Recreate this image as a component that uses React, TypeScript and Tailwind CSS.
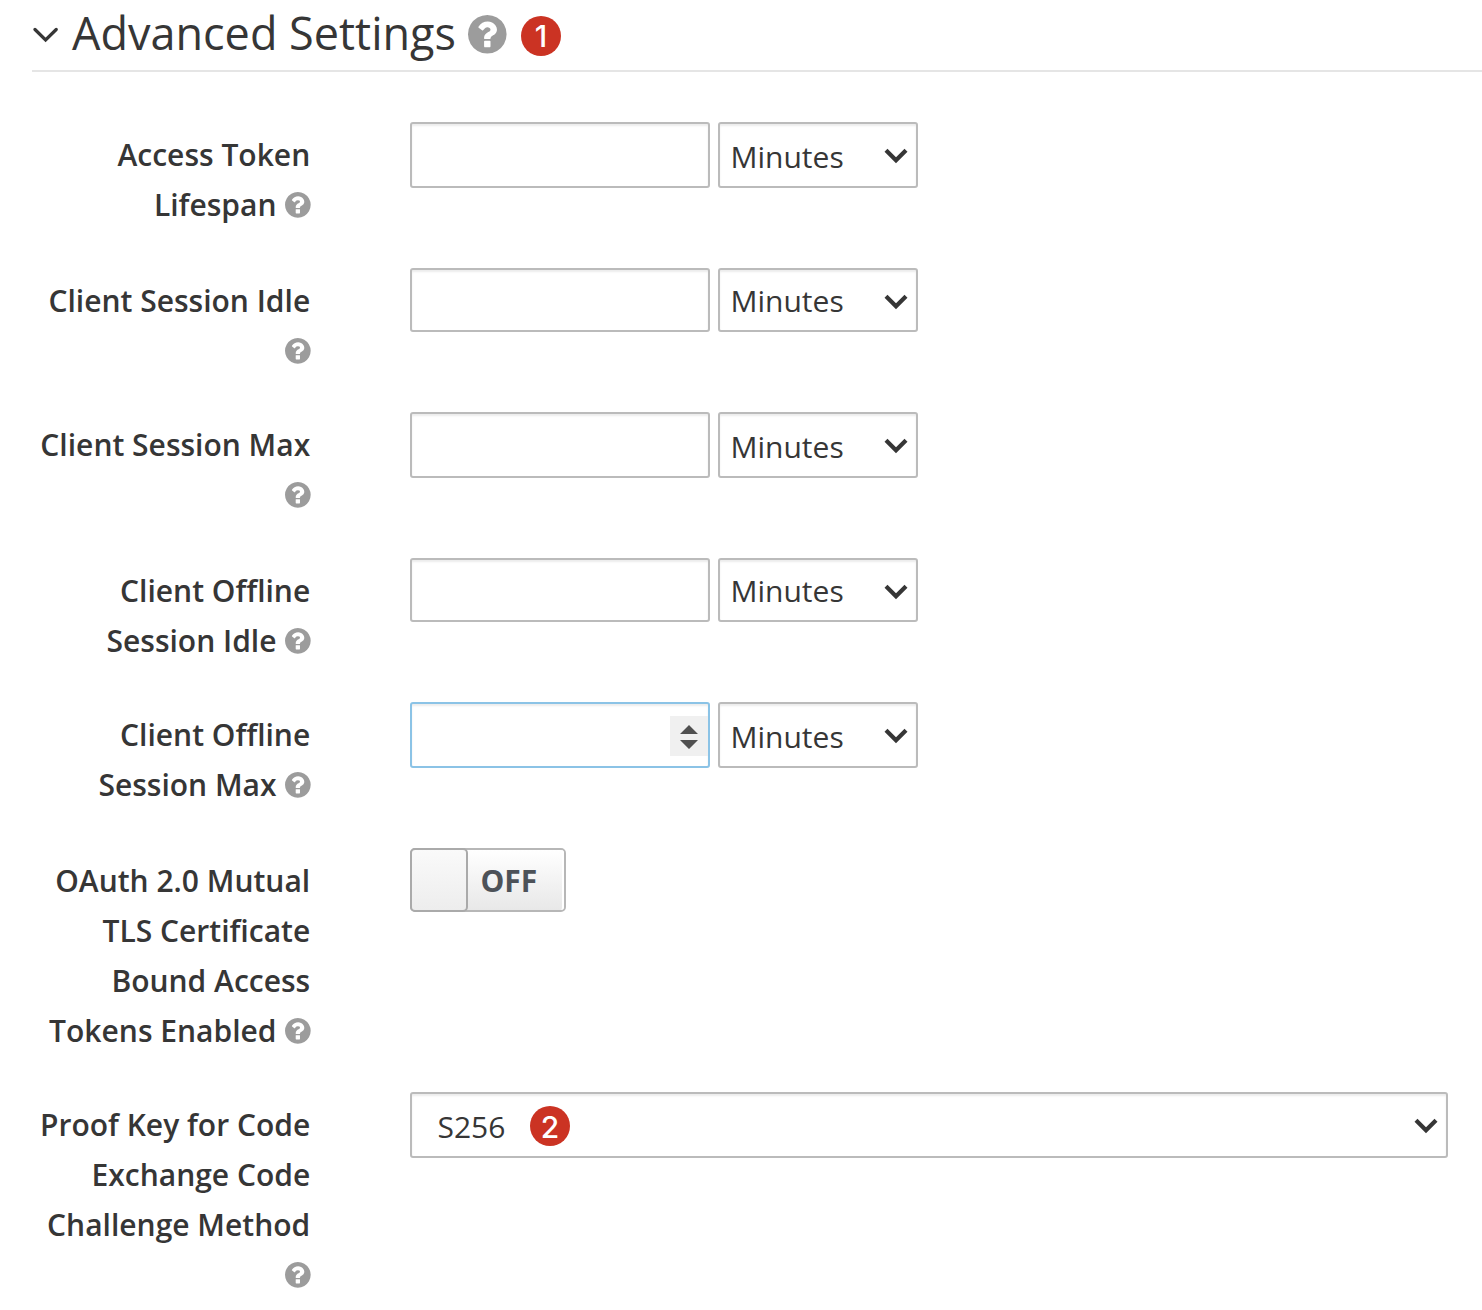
import React from 'react';

function HelpIcon({ className }: { className: string }) {
  return (
    <svg viewBox="128 128 1536 1536" className={`overflow-visible ${className}`} fill="#9c9c9c" aria-hidden="true">
      <path d="M1024 1376v-192q0-14-9-23t-23-9h-192q-14 0-23 9t-9 23v192q0 14 9 23t23 9h192q14 0 23-9t9-23zm256-672q0-88-55.5-163t-138.5-116-170-41q-243 0-371 213-15 24 8 42l132 100q7 6 19 6 16 0 25-12 53-68 86-92 34-24 86-24 48 0 85.5 26t37.5 59q0 38-20 61t-68 45q-63 28-115.5 86.5t-52.5 125.5v36q0 14 9 23t23 9h192q14 0 23-9t9-23q0-19 21.5-49.5t54.5-49.5q32-18 49-28.5t46-35 44.5-48 28-60.5 12.5-81zm384 192q0 209-103 385.5t-279.5 279.5-385.5 103-385.5-103-279.5-279.5-103-385.5 103-385.5 279.5-279.5 385.5-103 385.5 103 279.5 279.5 103 385.5z" />
    </svg>
  );
}

function Chevron({ className }: { className: string }) {
  return (
    <svg viewBox="0 0 24 16" className={`h-4 w-6 shrink-0 ${className}`} fill="none" stroke="#363636" strokeWidth="4.2" aria-hidden="true">
      <path d="M2 2.3 12 12.2 22 2.3" />
    </svg>
  );
}

function Badge({ children }: { children: React.ReactNode }) {
  return (
    <span className="flex size-10 items-center justify-center rounded-full bg-[#cb3323] pt-px font-[Inter,sans-serif] text-[30px] leading-none font-medium text-white">
      {children}
    </span>
  );
}

function Row({ lines, height, children }: { lines: string[]; height: string; children: React.ReactNode }) {
  return (
    <div className={`flex items-start ${height}`}>
      <div className="w-[310.2px] shrink-0 pt-2 text-right text-[30px] leading-[50px] font-semibold whitespace-nowrap">
        {lines.map((line, i) => (
          <div key={i} className="flex h-[50px] items-center justify-end gap-2">
            {line && <span>{line}</span>}
            {i === lines.length - 1 && <HelpIcon className="size-[25.7px]" />}
          </div>
        ))}
      </div>
      <div className="ml-[99.8px] flex gap-2">{children}</div>
    </div>
  );
}

const field = 'rounded-[3px] border-2 bg-white shadow-[inset_0_2px_2px_rgba(0,0,0,0.075)]';

function Duration({ lines, height, box, text, chevron, focused }: { lines: string[]; height: string; box: string; text: string; chevron: string; focused?: boolean }) {
  return (
    <Row lines={lines} height={height}>
      <div className={`flex w-[300px] items-center justify-end ${field} ${box} ${focused ? 'border-[#8bc3e6]' : 'border-[#bbb]'}`}>
        {focused && (
          <span className="mt-0.5 flex h-10 w-[38px] items-center justify-center bg-[#f0f0f0]">
            <svg viewBox="0 0 18 24" className="mt-0.5 h-6 w-[18px]" fill="#505050" aria-hidden="true">
              <path d="M9 0 18 9H0zM0 15h18l-9 9z" />
            </svg>
          </span>
        )}
      </div>
      <div className={`flex w-[200px] items-center justify-between border-[#bbb] pr-2 pl-[10.5px] text-[30px] leading-none ${field} ${box}`}>
        <span className={text}>Minutes</span>
        <Chevron className={chevron} />
      </div>
    </Row>
  );
}

export default function App() {
  return (
    <main className="h-[1310px] overflow-hidden bg-white font-['Open_Sans',sans-serif] text-[#363636]">
      <header className="ml-8 flex h-[72px] items-center border-b-2 border-[#e5e5e5]">
        <svg viewBox="0 0 26 16" className="ml-px h-4 w-[26px]" fill="none" stroke="#363636" strokeWidth="3.2" strokeLinecap="round" aria-hidden="true">
          <path d="M2 2.5 12.6 13 23.2 2.5" />
        </svg>
        <h1 className="mb-1 ml-[13px] text-[45px] leading-[66px] whitespace-nowrap">Advanced Settings</h1>
        <HelpIcon className="mb-0.5 ml-[11.8px] size-[38.6px]" />
        <div className="mt-px ml-[14.7px]"><Badge>1</Badge></div>
      </header>
      <div className="pt-[50px]">
        <Duration lines={['Access Token', 'Lifespan']} height="h-[146px]" box="h-[66px]" text="pt-1" chevron="mt-0.5" />
        <Duration lines={['Client Session Idle', '']} height="h-36" box="h-16" text="pt-0.5" chevron="mt-[3px]" />
        <Duration lines={['Client Session Max', '']} height="h-[146px]" box="h-[66px]" text="pt-1" chevron="mt-0.5" />
        <Duration lines={['Client Offline', 'Session Idle']} height="h-36" box="h-16" text="pt-0.5" chevron="mt-[3px]" />
        <Duration lines={['Client Offline', 'Session Max']} height="h-[146px]" box="h-[66px]" text="pt-1" chevron="mt-0.5" focused />
        <Row lines={['OAuth 2.0 Mutual', 'TLS Certificate', 'Bound Access', 'Tokens Enabled']} height="h-[244px]">
          <div className="flex h-16 w-[156px] rounded-[5px] border-2 border-[#b7b7b7] bg-linear-to-b from-white to-[#e8e8e8]">
            <span className="-my-0.5 -ml-0.5 h-16 w-[58px] rounded-[5px] border-2 border-[#aaa] bg-linear-to-b from-[#fafafa] to-[#ededed]" />
            <span className="flex flex-1 items-center rounded-r-[3px] border-r-2 border-white pt-0.5 pl-[12.5px] text-[30px] leading-none font-bold text-[#4d5258]">OFF</span>
          </div>
        </Row>
        <Row lines={['Proof Key for Code', 'Exchange Code', 'Challenge Method', '']} height="h-[218px]">
          <div className={`flex h-[66px] w-[1038px] items-center border-[#bbb] pr-2 pl-[25.5px] text-[30px] leading-none ${field}`}>
            <span className="pt-1">S256</span>
            <div className="mt-0.5 ml-[24.5px]"><Badge>2</Badge></div>
            <div className="ml-auto"><Chevron className="mt-0.5" /></div>
          </div>
        </Row>
      </div>
    </main>
  );
}
